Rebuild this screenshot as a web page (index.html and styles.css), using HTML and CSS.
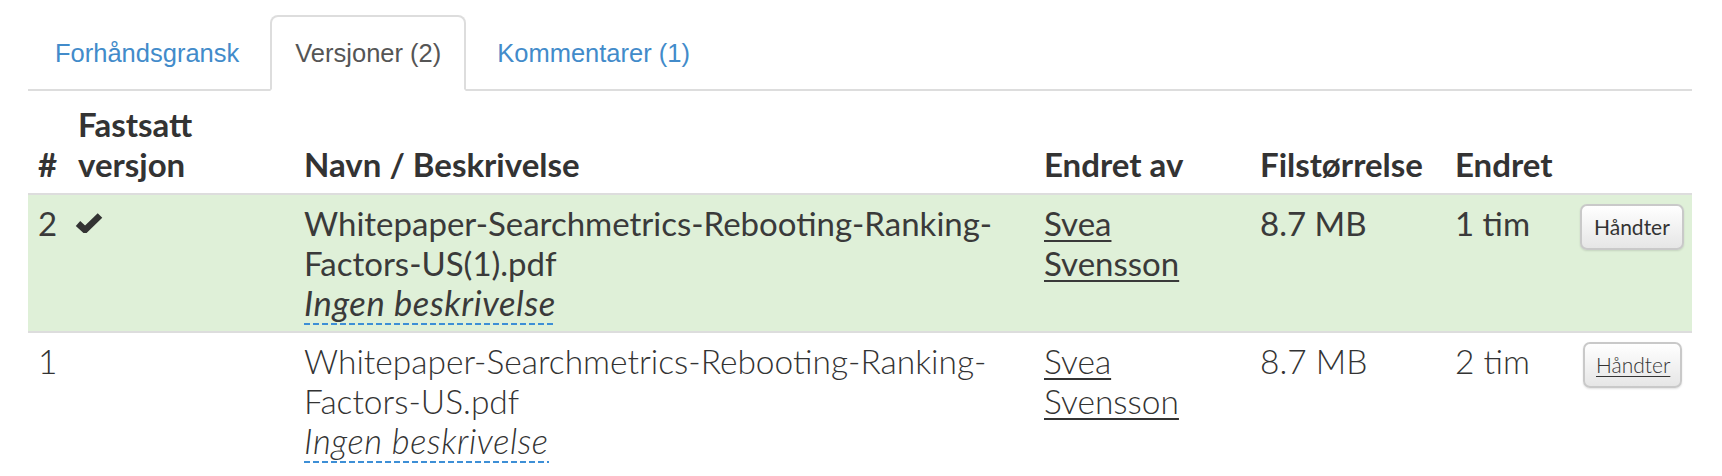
FILE: index.html
```html
<!DOCTYPE html>
<html lang="no">
<head>
<meta charset="utf-8">
<title>Versjoner</title>
<link rel="stylesheet" href="styles.css">
</head>
<body>
<div class="page">
  <ul class="tabs">
    <li><a class="tab" href="#">Forhåndsgransk</a></li>
    <li><a class="tab active" href="#">Versjoner (2)</a></li>
    <li><a class="tab" href="#">Kommentarer (1)</a></li>
  </ul>
  <table class="versions">
    <colgroup>
      <col class="c-num">
      <col class="c-fixed">
      <col class="c-name">
      <col class="c-by">
      <col class="c-size">
      <col class="c-date">
      <col class="c-act">
    </colgroup>
    <thead>
      <tr>
        <th>#</th>
        <th>Fastsatt versjon</th>
        <th>Navn / Beskrivelse</th>
        <th>Endret av</th>
        <th>Filstørrelse</th>
        <th>Endret</th>
        <th></th>
      </tr>
    </thead>
    <tbody>
      <tr class="current">
        <td>2</td>
        <td><svg class="check" width="28" height="20" viewBox="0 0 28 20" aria-hidden="true"><path d="M3 10.5 L10 17 L25 2.5" fill="none" stroke="#333" stroke-width="6.5" stroke-linejoin="miter"/></svg></td>
        <td><div class="fname">Whitepaper-Searchmetrics-Rebooting-Ranking-Factors-US(1).pdf</div><span class="desc">Ingen beskrivelse</span></td>
        <td><a class="user" href="#">Svea Svensson</a></td>
        <td>8.7 MB</td>
        <td>1 tim</td>
        <td><button class="btn" type="button">Håndter</button></td>
      </tr>
      <tr class="old">
        <td>1</td>
        <td></td>
        <td><div class="fname">Whitepaper-Searchmetrics-Rebooting-Ranking-Factors-US.pdf</div><span class="desc">Ingen beskrivelse</span></td>
        <td><a class="user" href="#">Svea Svensson</a></td>
        <td>8.7 MB</td>
        <td>2 tim</td>
        <td><button class="btn btn-hover" type="button">Håndter</button></td>
      </tr>
    </tbody>
  </table>
</div>
</body>
</html>
```
FILE: styles.css
```css
html, body {
  margin: 0;
  padding: 0;
  background: #fff;
}

.page {
  padding: 15px 0 0 28px;
  width: 1664px;
  font-family: Lato, "Liberation Sans", sans-serif;
  color: #333;
}

/* Tabs */
.tabs {
  display: flex;
  list-style: none;
  margin: 0;
  padding: 0 0 0 2px;
  border-bottom: 2px solid #ddd;
}

.tabs li {
  margin-bottom: -2px;
  margin-right: 6px;
}

.tab {
  display: block;
  padding: 19px 23px;
  border: 2px solid transparent;
  border-radius: 8px 8px 0 0;
  font-family: "Liberation Sans", Arial, sans-serif;
  font-size: 25.5px;
  line-height: 34px;
  color: #428bca;
  text-decoration: none;
}

.tab.active {
  color: #555;
  background: #fff;
  border-color: #ddd #ddd transparent #ddd;
}

/* Table */
.versions {
  width: 1664px;
  table-layout: fixed;
  border-collapse: collapse;
  border-spacing: 0;
  font-size: 33px;
  line-height: 40px;
}

.c-num { width: 40px; }
.c-fixed { width: 226px; }
.c-name { width: 740px; }
.c-by { width: 216px; }
.c-size { width: 195px; }
.c-date { width: 125px; }
.c-act { width: 122px; }

.versions th {
  text-align: left;
  vertical-align: bottom;
  font-weight: 700;
  padding: 13px 10px 9px;
  border-bottom: 2px solid #ddd;
}

.versions td {
  vertical-align: top;
  padding: 8px 10px;
  border-top: 2px solid #ddd;
}

.versions tbody tr:first-child td {
  border-top: 0;
}

.current td {
  background: #dff0d8;
  color: #3a3a3a;
}

.old td {
  font-weight: 300;
  font-size: 33.5px;
}

.check {
  display: block;
  margin: 10px 0 0 -3px;
}

.desc {
  font-style: italic;
  font-size: 34.5px;
  letter-spacing: 0.6px;
  padding-bottom: 2px;
  background-image: repeating-linear-gradient(90deg, #3d8fd6 0 6px, transparent 6px 9px);
  background-size: 100% 2px;
  background-position: left bottom;
  background-repeat: no-repeat;
}

.user {
  color: inherit;
  text-decoration: underline;
  text-decoration-thickness: 2px;
  text-underline-offset: 4px;
}

.btn {
  display: block;
  margin-top: 1px;
  height: 46px;
  padding: 0 12px;
  border: 2px solid #c9c9c9;
  border-radius: 7px;
  background: linear-gradient(#ffffff, #e6e6e6);
  box-shadow: 0 1px 2px rgba(0, 0, 0, 0.12);
  font-family: Lato, "Liberation Sans", sans-serif;
  font-size: 21px;
  font-weight: 400;
  line-height: 40px;
  color: #333;
  cursor: pointer;
}

.btn-hover {
  margin-left: 3px;
  padding: 0 10px 0 11px;
  font-weight: 300;
  text-decoration: underline;
  text-decoration-thickness: 1px;
  text-underline-offset: 3px;
}
```
